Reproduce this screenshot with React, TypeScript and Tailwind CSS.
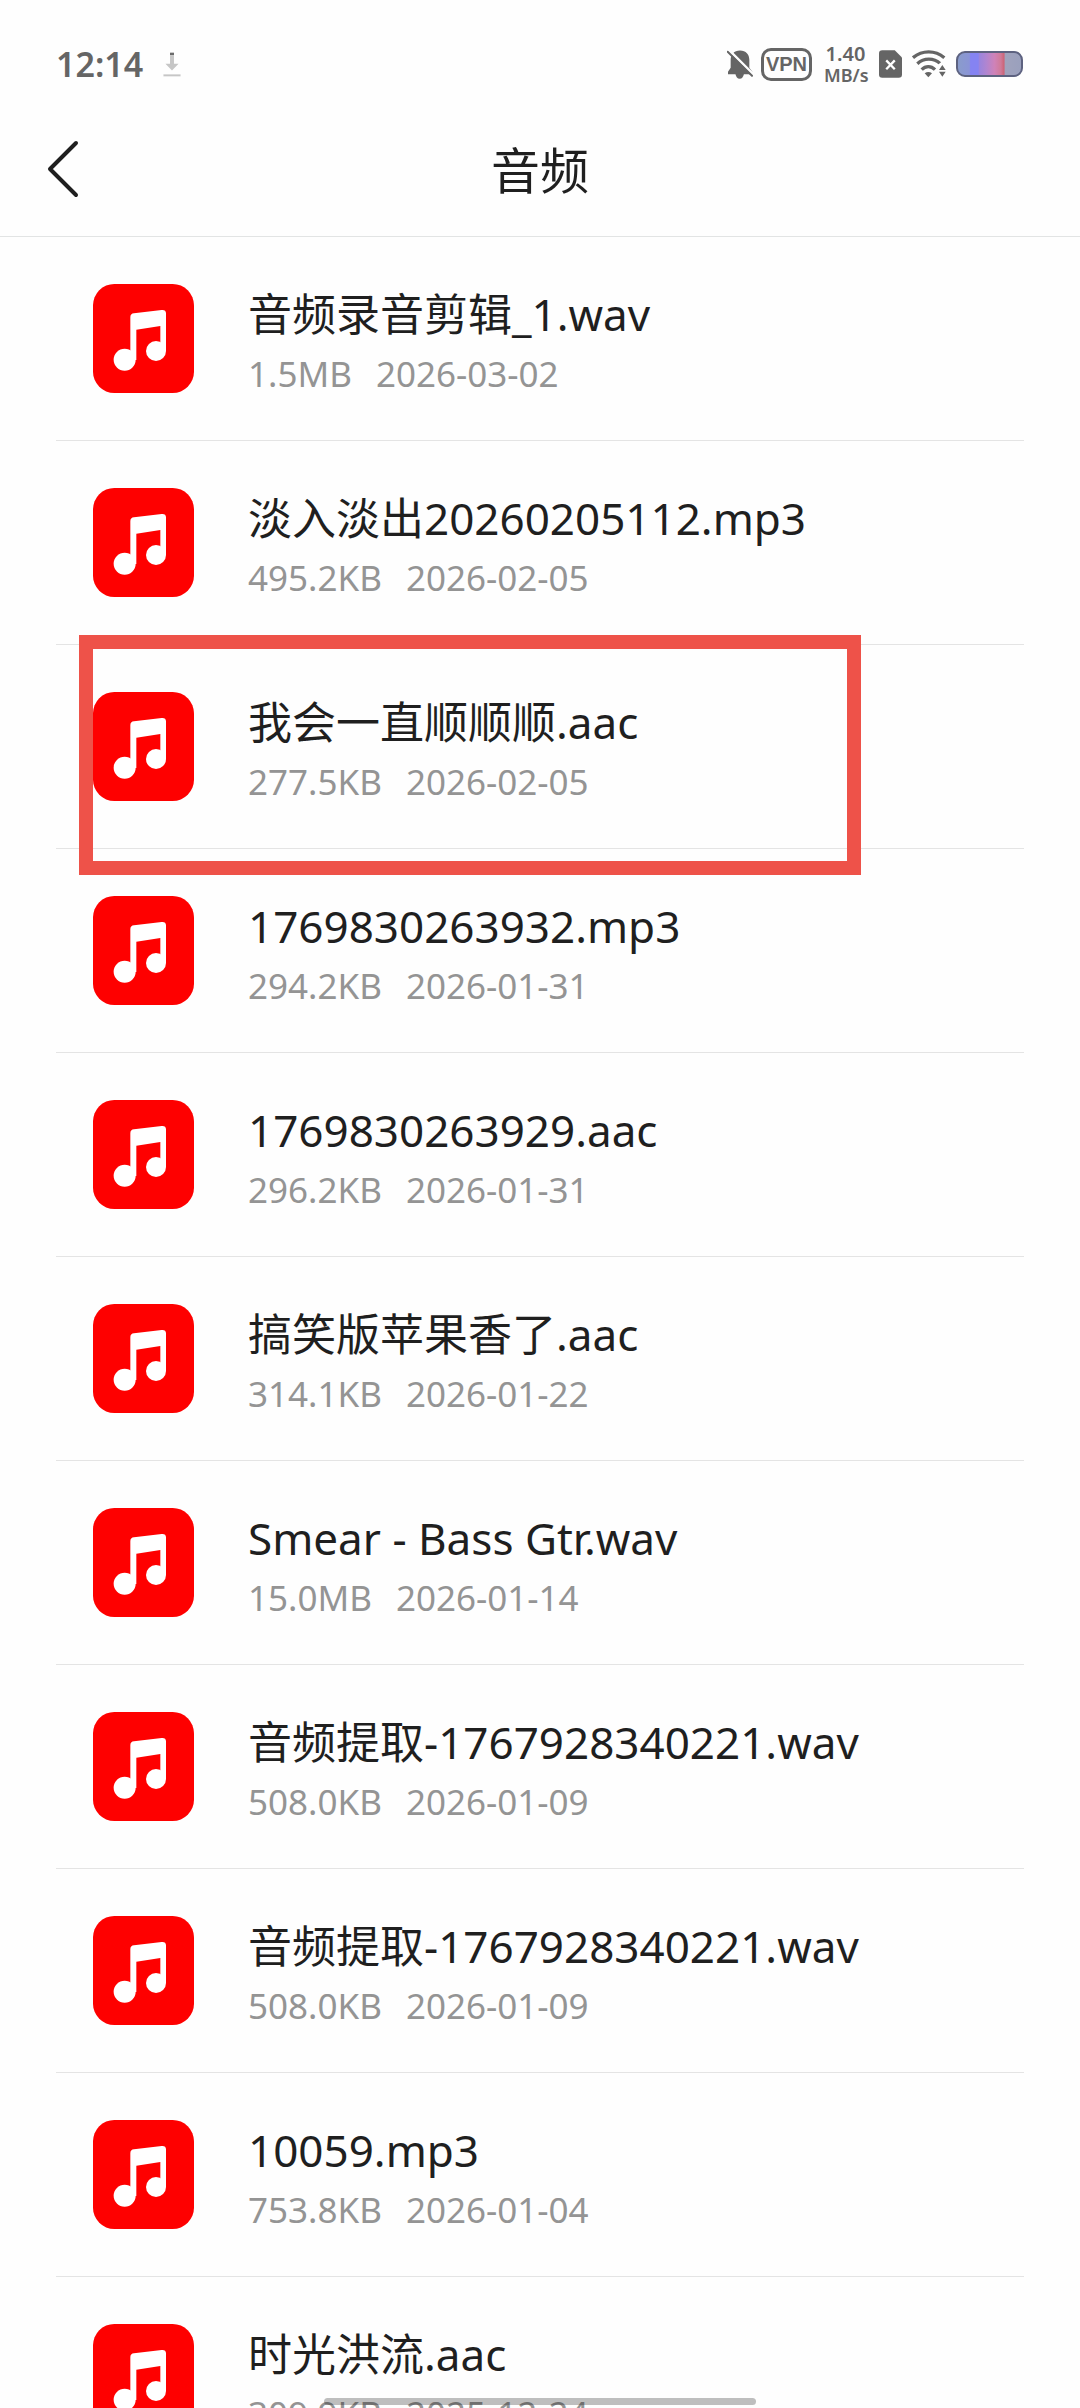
const files = [
  { name: '音频录音剪辑_1.wav', size: '1.5MB', date: '2026-03-02' },
  { name: '淡入淡出20260205112.mp3', size: '495.2KB', date: '2026-02-05' },
  { name: '我会一直顺顺顺.aac', size: '277.5KB', date: '2026-02-05', marked: true },
  { name: '1769830263932.mp3', size: '294.2KB', date: '2026-01-31' },
  { name: '1769830263929.aac', size: '296.2KB', date: '2026-01-31' },
  { name: '搞笑版苹果香了.aac', size: '314.1KB', date: '2026-01-22' },
  { name: 'Smear - Bass Gtr.wav', size: '15.0MB', date: '2026-01-14' },
  { name: '音频提取-1767928340221.wav', size: '508.0KB', date: '2026-01-09' },
  { name: '音频提取-1767928340221.wav', size: '508.0KB', date: '2026-01-09' },
  { name: '10059.mp3', size: '753.8KB', date: '2026-01-04' },
  { name: '时光洪流.aac', size: '309.9KB', date: '2025-12-24' },
];

function DownloadIcon() {
  return (
    <svg viewBox="0 0 54 76" className="w-[18px] h-[25px]" aria-hidden="true">
      <path d="M21 2h12v8H21z" fill="#6b6b6b" />
      <path d="M21 10h12v26h14L27 56 7 36h14z" fill="#c6c6c6" />
      <path d="M1 68h52v6H1z" fill="#c6c6c6" />
    </svg>
  );
}

function MutedBellIcon() {
  return (
    <svg viewBox="0 0 78 86" className="w-[26px] h-[29px]" aria-hidden="true">
      <path d="M39 1c18 0 28 12 28 28v24l9 12v7H3v-7l8-12V29C11 13 21 1 39 1z" fill="#656565" />
      <path d="M25 71h26c-2 9-6 15-13 15s-11-6-13-15z" fill="#656565" />
      <path d="M4 -2l78 78" stroke="#fefefe" strokeWidth="8" />
      <path d="M2 5l73 72" stroke="#656565" strokeWidth="6" strokeLinecap="round" />
    </svg>
  );
}

function SimIcon() {
  return (
    <svg viewBox="0 0 70 84" className="w-[23px] h-[28px]" aria-hidden="true">
      <path d="M10 0h38l22 22v52q0 10-10 10H10Q0 84 0 74V10Q0 0 10 0z" fill="#656565" />
      <path d="M22 31l26 27M48 31L22 58" stroke="#fff" strokeWidth="7" />
    </svg>
  );
}

function WifiIcon() {
  return (
    <svg viewBox="0 0 102 84" className="w-[34px] h-[28px]" aria-hidden="true">
      <g fill="none" stroke="#656565" strokeWidth="10">
        <path d="M3 23c28-23 66-23 94 0" />
        <path d="M16 41c20-18 49-18 69 0" />
        <path d="M29 59c12-12 28-12 40 0" />
      </g>
      <path d="M38 70q11-8 22 0L49 82z" fill="#656565" />
      <path d="M76 62V46l15-12 11 10v18z" fill="#fefefe" />
      <path d="M81 60l10-15 10 15zM81 65l10 15 10-15z" fill="#656565" />
    </svg>
  );
}

function MusicIcon() {
  return (
    <svg viewBox="0 0 303 327" className="w-[101px] h-[109px] shrink-0" aria-hidden="true">
      <rect width="303" height="327" rx="64" fill="#fe0000" />
      <g fill="#fff">
        <path d="M112 100q0-11 11-12l83-10q13-1 13 10v113h-17v-75l-72 11v91h-18z" />
        <circle cx="95" cy="227" r="33" />
        <circle cx="189" cy="201" r="30" />
      </g>
    </svg>
  );
}

function StatusBar() {
  return (
    <div className="flex items-center justify-between h-32 pl-14 pr-[57px] text-[#656565]">
      <div className="flex items-center gap-5">
        <span className="text-[34px] leading-10 font-semibold">12:14</span>
        <DownloadIcon />
      </div>
      <div className="flex items-center">
        <MutedBellIcon />
        <span className="ml-2 w-[51px] h-[33px] border-3 border-[#656565] rounded-[10px] flex items-center justify-center font-['Liberation_Sans',sans-serif] font-bold text-[20px] leading-none">
          VPN
        </span>
        <span className="ml-3 w-[43px] flex flex-col text-center text-[18px] leading-5 font-semibold font-['Noto_Sans',sans-serif]">
          <span className="text-[20px] leading-[22px]">1.40</span>
          <span>MB/s</span>
        </span>
        <span className="ml-3">
          <SimIcon />
        </span>
        <span className="ml-[10px]">
          <WifiIcon />
        </span>
        {/* Battery */}
        <span className="ml-[10px] w-[67px] h-[26px] rounded-[9px] border-2 border-[#5d6280] bg-[linear-gradient(90deg,#8a9ccb_0%,#8a94d6_18%,#8583f2_20%,#8583f2_32%,#9a84dd_34%,#b085d0_45%,#cf82b8_58%,#d07a98_68%,#cc6477_73%,#a0a3bd_75%,#9aa0bd_100%)]" />
      </div>
    </div>
  );
}

export default function App() {
  return (
    <div className="relative h-screen overflow-hidden flex flex-col bg-[#fefefe] text-[#1f1f1f] font-['Noto_Sans','Noto_Sans_CJK_SC',sans-serif]">
      <StatusBar />
      <header className="relative shrink-0 h-[109px] flex justify-center border-b border-[#e2e4e4]">
        <button type="button" aria-label="返回" className="absolute left-[46px] top-3 cursor-pointer">
          <svg viewBox="0 0 34 58" className="w-[34px] h-[58px]" fill="none" stroke="#1f1f1f" strokeWidth="4" strokeLinecap="round" strokeLinejoin="round">
            <path d="M30 3L4 29l26 26" />
          </svg>
        </button>
        <h1 className="mt-3 text-[49px] leading-[60px] font-normal">音频</h1>
      </header>
      <main className="flex-1 min-h-0 overflow-hidden px-14">
        <ul>
          {files.map((file, idx) => (
            <li key={idx} className="relative border-b border-[#e4e4e4]">
              <button type="button" className="flex items-start w-full pl-[37px] pt-[47px] pb-[41px] text-left cursor-pointer">
                <MusicIcon />
                <span className="ml-[54px] flex flex-col gap-[5px] whitespace-nowrap">
                  <span className="text-[44px] leading-[60px]">{file.name}</span>
                  <span className="flex gap-6 text-[35px] leading-[50px] text-[#949494]">
                    <span>{file.size}</span>
                    <span>{file.date}</span>
                  </span>
                </span>
              </button>
              {file.marked && (
                <div className="absolute -top-[10px] left-[23px] z-10 w-[782px] h-60 border-14 border-[#ee5249] pointer-events-none" />
              )}
            </li>
          ))}
        </ul>
      </main>
      {/* Home indicator */}
      <div className="absolute bottom-[3px] left-1/2 -translate-x-1/2 w-[432px] h-[7px] rounded-full bg-black/25" />
    </div>
  );
}
